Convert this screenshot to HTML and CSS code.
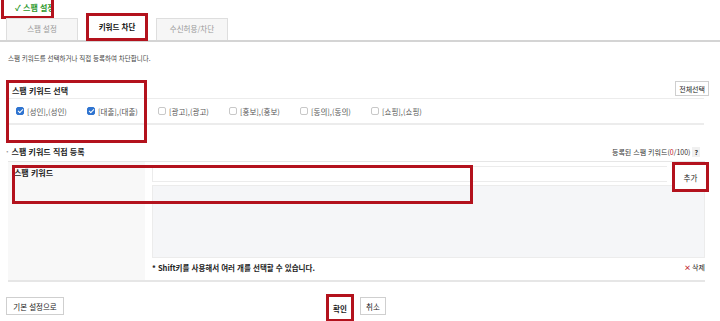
FILE: index.html
```html
<!DOCTYPE html>
<html lang="ko">
<head>
  <meta charset="UTF-8">
  <title>스팸 설정</title>
  <link rel="stylesheet" href="styles.css">
</head>
<body>
  <div class="page">
    <div class="title-row">
      <span class="page-title mark">&#10003; 스팸 설정</span>
    </div>
    <ul class="tabs">
      <li class="tab">스팸 설정</li>
      <li class="tab active mark">키워드 차단</li>
      <li class="tab">수신허용/차단</li>
    </ul>
    <p class="desc">스팸 키워드를 선택하거나 직접 등록하여 차단합니다.</p>

    <div class="section-head">
      <h2>스팸 키워드 선택</h2>
      <button class="btn small">전체선택</button>
    </div>
    <div class="keyword-strip">
      <label class="kw"><span class="cb checked"></span>[성인],(성인)</label>
      <label class="kw"><span class="cb checked"></span>[대출],(대출)</label>
      <label class="kw"><span class="cb"></span>[광고],(광고)</label>
      <label class="kw"><span class="cb"></span>[홍보],(홍보)</label>
      <label class="kw"><span class="cb"></span>[동의],(동의)</label>
      <label class="kw"><span class="cb"></span>[쇼핑],(쇼핑)</label>
    </div>

    <div class="section-head second">
      <h2><span class="dot">·</span>스팸 키워드 직접 등록</h2>
      <span class="count">등록된 스팸 키워드(<em>0</em>/100) <span class="help">?</span></span>
    </div>
    <div class="reg-table">
      <div class="label-cell">스팸 키워드</div>
      <div class="field-cell">
        <div class="input-row">
          <div class="input"></div>
          <button class="btn add mark">추가</button>
        </div>
        <div class="list-box"></div>
        <div class="note-row">
          <span>* Shift키를 사용해서 여러 개를 선택할 수 있습니다.</span>
          <span class="del"><b>×</b>삭제</span>
        </div>
      </div>
    </div>

    <div class="footer">
      <button class="btn wide">기본 설정으로</button>
      <div class="actions">
        <button class="btn strong mark">확인</button>
        <button class="btn">취소</button>
      </div>
    </div>

    <div class="note-box box-select"></div>
    <div class="note-box box-keyword"></div>
  </div>
</body>
</html>
```

FILE: styles.css
```css
* {
  box-sizing: border-box;
}

body {
  margin: 0;
  background: #fff;
  font-family: "Noto Sans CJK KR", "Noto Sans", sans-serif;
  color: #222;
  font-size: 7px;
}

.page {
  position: relative;
  width: 720px;
  height: 321px;
  overflow: hidden;
}

.mark {
  border: 3px solid #b3121d !important;
}

.title-row {
  height: 19px;
  padding-left: 1px;
}

.page-title {
  display: inline-block;
  width: 53px;
  height: 19px;
  padding: 2px 0 0 11px;
  color: #2f9a2f;
  font-size: 8px;
  font-weight: bold;
  line-height: 12px;
  white-space: nowrap;
  overflow: hidden;
  border-top-width: 0 !important;
}

.tabs {
  display: flex;
  align-items: flex-end;
  margin: -4px 0 0;
  padding: 0 0 0 6px;
  list-style: none;
  height: 27px;
  border-bottom: 2px solid #d4d4d4;
}

.tab {
  width: 72px;
  height: 22px;
  margin-right: 8px;
  background: #f6f6f6;
  border: 1px solid #dedede;
  border-bottom: none;
  color: #999;
  text-align: center;
  line-height: 20px;
  font-size: 7.5px;
}

.tab.active {
  width: 62px;
  height: 28px;
  margin-bottom: -1px;
  background: #fff;
  color: #111;
  font-weight: bold;
  line-height: 22px;
}

.desc {
  margin: 11px 0 0 8px;
  font-size: 6.5px;
  color: #444;
}

.section-head {
  display: flex;
  justify-content: space-between;
  align-items: flex-end;
  margin: 17px 11px 0 12px;
  height: 16px;
}

.section-head h2 {
  margin: 0;
  font-size: 8px;
  font-weight: bold;
}

.section-head.second {
  margin: 18px 20px 0 6px;
  height: 14px;
}

.dot {
  color: #999;
  margin-right: 3px;
}

.btn {
  font-family: inherit;
  font-size: 7.5px;
  color: #222;
  background: #fff;
  border: 1px solid #cfcfcf;
  padding: 0 5px;
  height: 18px;
}

.btn.wide {
  width: 58px;
}

.btn.small {
  height: 15px;
  padding: 0 3px;
  font-size: 7px;
}

.keyword-strip {
  display: flex;
  align-items: center;
  margin: 2px 16px 0 8px;
  height: 27px;
  padding-left: 8px;
  border-top: 1px solid #ececec;
  border-bottom: 2px solid #ececec;
}

.kw {
  display: flex;
  align-items: center;
  width: 71px;
  color: #555;
  font-size: 7.5px;
}

.cb {
  width: 8px;
  height: 8px;
  margin-right: 3px;
  border: 1px solid #c8c8c8;
  border-radius: 2px;
  background: #fff;
}

.cb.checked {
  position: relative;
  background: #2f74d0;
  border-color: #2f74d0;
}

.cb.checked::after {
  content: "";
  position: absolute;
  left: 2px;
  top: 0;
  width: 2px;
  height: 4px;
  border: solid #fff;
  border-width: 0 1px 1px 0;
  transform: rotate(45deg);
}

.count {
  font-size: 7px;
  color: #333;
}

.count em {
  font-style: normal;
  color: #c0161f;
}

.help {
  display: inline-block;
  padding: 0 2px;
  background: #f0f0f0;
  font-weight: bold;
}

.reg-table {
  display: flex;
  margin: 4px 15px 0 8px;
  height: 121px;
  border-top: 1px solid #e6e6e6;
  border-bottom: 2px solid #e6e6e6;
}

.label-cell {
  width: 137px;
  background: #f8f8f8;
  padding: 5px 0 0 6px;
  font-size: 8px;
  font-weight: bold;
}

.field-cell {
  flex: 1;
  display: flex;
  flex-direction: column;
  padding: 3px 0 0 7px;
}

.input-row {
  display: flex;
  gap: 5px;
  height: 20px;
}

.input {
  flex: 1;
  height: 16px;
  margin-top: 1px;
  border: 1px solid #ececec;
  border-right: none;
}

.btn.add {
  position: relative;
  width: 37px;
  height: 30px;
  margin: -3px -4px 0 0;
  padding: 0;
}

.list-box {
  height: 73px;
  background: #f5f6f8;
  border: 1px solid #ececec;
}

.note-row {
  display: flex;
  justify-content: space-between;
  padding-top: 4px;
  font-size: 7.5px;
  font-weight: bold;
  color: #222;
}

.del {
  font-weight: normal;
  font-size: 7px;
}

.del b {
  color: #c0161f;
  margin-right: 1px;
}

.footer {
  display: flex;
  align-items: center;
  margin: 8px 0 0 6px;
  gap: 262px;
}

.actions {
  display: flex;
  gap: 6px;
  align-items: center;
}

.actions .btn {
  width: 26px;
  padding: 0;
}

.btn.strong {
  width: 28px;
  height: 28px;
  font-weight: bold;
  margin-top: 4px;
}

.note-box {
  position: absolute;
  border: 3px solid #b3121d;
}

.box-select {
  left: 6px;
  top: 80px;
  width: 141px;
  height: 63px;
}

.box-keyword {
  left: 12px;
  top: 165px;
  width: 461px;
  height: 39px;
}
```
